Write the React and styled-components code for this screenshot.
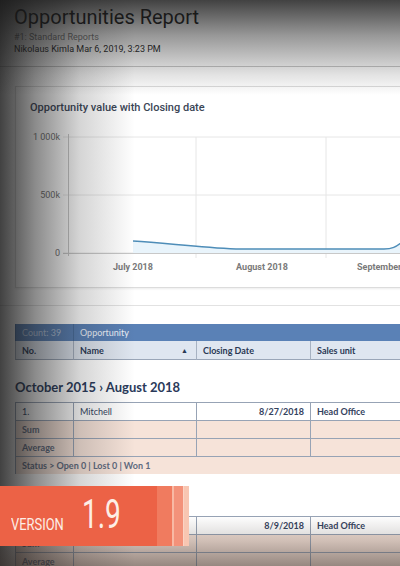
import React from 'react';
import styled, { createGlobalStyle } from 'styled-components';

const Global = createGlobalStyle`
  html, body {
    margin: 0;
    padding: 0;
    background: #fff;
  }
`;

const Page = styled.div`
  position: relative;
  width: 400px;
  height: 566px;
  overflow: hidden;
  background: #fff;
  font-family: Lato, "Liberation Sans", sans-serif;
`;

const Header = styled.header`
  padding: 5px 14px 0;
  height: 61px;
  border-bottom: 1px solid #c9c9c9;
  font-family: Roboto, "Liberation Sans", sans-serif;
`;

const Title = styled.h1`
  margin: 0;
  font-size: 20px;
  font-weight: 400;
  line-height: 25px;
  color: #1c1c1c;
`;

const Sub = styled.div`
  margin-top: 2px;
  font-size: 9px;
  line-height: 11px;
  color: #7a7a7a;
`;

const Meta = styled.div`
  font-size: 9px;
  line-height: 12px;
  color: #2a2a2a;
`;

const ChartCard = styled.section`
  margin: 19px 0 0 15px;
  width: 400px;
  height: 200px;
  border: 1px solid #dcdcdc;
  border-right: none;
  background: #fff;
  box-shadow: 0 1px 2px rgba(0, 0, 0, 0.08);
`;

const ChartTitle = styled.h2`
  margin: 0;
  padding: 14px 14px 0;
  height: 21px;
  font-family: Roboto, "Liberation Sans", sans-serif;
  font-size: 11px;
  font-weight: 500;
  color: #3b4656;
`;

const Svg = styled.svg`
  display: block;
  font-family: Roboto, "Liberation Sans", sans-serif;
`;

const Divider = styled.div`
  margin-top: 17px;
  height: 1px;
  background: #e2e2e2;
`;

const Grid = styled.div`
  display: grid;
  grid-template-columns: 58px 123px 114px 120px;
  margin-left: 15px;
  width: 415px;
  font-size: 9px;
`;

const HeadGrid = styled(Grid)`
  margin-top: 18px;
`;

const HeadTop = styled.div`
  height: 17px;
  line-height: 17px;
  padding-left: 6px;
  background: #5a81b6;
  color: ${(p) => (p.$dim ? '#b3c5de' : '#eef3fa')};
  border-left: 1px solid #4a6f9f;
  grid-column: ${(p) => p.$span || 'auto'};
`;

const HeadCell = styled.div`
  display: flex;
  align-items: center;
  justify-content: space-between;
  height: 18px;
  padding: 0 8px 0 6px;
  background: #dfe6f0;
  border-left: 1px solid #a7b2c2;
  border-bottom: 1px solid #9aa6b8;
  font-weight: 700;
  color: #2a3854;
`;

const Caret = styled.span`
  font-size: 7px;
  color: #2a3854;
`;

const GroupTitle = styled.h3`
  margin: 0;
  padding: 19px 0 6px 15px;
  height: 17px;
  font-size: 13px;
  font-weight: 700;
  color: #2a3a5a;
`;

const Cell = styled.div`
  height: 17px;
  line-height: 17px;
  padding: 0 6px;
  background: ${(p) => (p.$peach ? '#f6e3d9' : '#fff')};
  border-left: 1px solid #97a3b5;
  border-top: 1px solid #97a3b5;
  text-align: ${(p) => (p.$right ? 'right' : 'left')};
  font-weight: ${(p) => (p.$bold ? 700 : 400)};
  color: ${(p) => (p.$muted ? '#5f6b80' : '#34425e')};
  grid-column: ${(p) => p.$span || 'auto'};
  white-space: nowrap;
  overflow: hidden;
`;

const Shade = styled.div`
  position: absolute;
  inset: 0;
  pointer-events: none;
  background:
    linear-gradient(to top, rgba(55, 45, 40, 0.5) 0px, rgba(55, 45, 40, 0.2) 25px, rgba(55, 45, 40, 0) 50px),
    linear-gradient(to bottom, rgba(24, 24, 24, 0.82) 0px, rgba(24, 24, 24, 0.45) 35px, rgba(24, 24, 24, 0.12) 75px, rgba(24, 24, 24, 0) 95px),
    linear-gradient(to right, rgba(24, 24, 24, 0.82) 0px, rgba(24, 24, 24, 0.5) 35px, rgba(24, 24, 24, 0.18) 80px, rgba(24, 24, 24, 0) 135px);
`;

const Badge = styled.div`
  position: absolute;
  left: 0;
  top: 486px;
  display: flex;
  height: 60px;
`;

const BadgeMain = styled.div`
  display: flex;
  align-items: flex-end;
  width: 157px;
  padding-bottom: 13px;
  box-sizing: border-box;
  background: #ec6246;
  color: #fdeee6;
  font-family: Roboto, "Liberation Sans", sans-serif;
  font-weight: 400;
`;

const Word = styled.span`
  display: inline-block;
  font-size: 17px;
  line-height: 17px;
  transform: scaleX(0.76);
  transform-origin: left bottom;
  margin-left: 11px;
  width: 71px;
`;

const Num = styled.span`
  display: inline-block;
  font-size: 40px;
  line-height: 36px;
  transform: scaleX(0.7);
  transform-origin: left bottom;
`;

const Stripe = styled.div`
  width: ${(p) => p.$w}px;
  background: ${(p) => p.$c};
`;

function Row({ cells }) {
  return cells.map((c, i) => (
    <Cell key={i} {...c.props}>
      {c.text}
    </Cell>
  ));
}

const dataRow = (no, name, date) => [
  { text: no },
  { text: name },
  { text: date, props: { $right: true, $bold: true } },
  { text: 'Head Office', props: { $bold: true } },
];

const peachRow = (label) => [
  { text: label, props: { $peach: true, $bold: true, $muted: true } },
  { text: '', props: { $peach: true } },
  { text: '', props: { $peach: true } },
  { text: '', props: { $peach: true } },
];

function Chart() {
  const grid = [15, 73, 131];
  return (
    <Svg width="384" height="160" viewBox="0 0 384 160">
      {grid.map((y) => (
        <line key={y} x1="47" x2="384" y1={y} y2={y} stroke="#e6e6e6" strokeWidth="1" />
      ))}
      {[180, 310].map((x) => (
        <line key={x} x1={x} x2={x} y1="15" y2="136" stroke="#e6e6e6" strokeWidth="1" />
      ))}
      <line x1="52.5" x2="52.5" y1="12" y2="134" stroke="#c8c8c8" />
      <line x1="47" x2="384" y1="131.5" y2="131.5" stroke="#c8c8c8" />
      <g fontSize="9" fill="#6f6f6f" textAnchor="end">
        <text x="44" y="18">1 000k</text>
        <text x="44" y="76">500k</text>
        <text x="44" y="134">0</text>
      </g>
      <g fontSize="9" fontWeight="700" fill="#7a7a7a" textAnchor="middle">
        <text x="117" y="148">July 2018</text>
        <text x="246" y="148">August 2018</text>
        <text x="341" y="148" textAnchor="start">September 2018</text>
      </g>
      <path d="M117 119 C150 121 180 125 220 127 L368 127 C376 127 380 125 386 120 L386 131 L117 131 Z" fill="#e9f4fb" />
      <path d="M117 119 C150 121 180 125 220 127 L368 127 C376 127 380 125 386 120" fill="none" stroke="#4e8db8" strokeWidth="1.5" />
    </Svg>
  );
}

export default function App() {
  return (
    <Page>
      <Global />
      <Header>
        <Title>Opportunities Report</Title>
        <Sub>#1: Standard Reports</Sub>
        <Meta>Nikolaus Kimla Mar 6, 2019, 3:23 PM</Meta>
      </Header>

      <ChartCard>
        <ChartTitle>Opportunity value with Closing date</ChartTitle>
        <Chart />
      </ChartCard>
      <Divider />

      <HeadGrid>
        <HeadTop $dim>Count: 39</HeadTop>
        <HeadTop $span="span 3">Opportunity</HeadTop>
        <HeadCell>No.</HeadCell>
        <HeadCell>
          Name <Caret>▲</Caret>
        </HeadCell>
        <HeadCell>Closing Date</HeadCell>
        <HeadCell>Sales unit</HeadCell>
      </HeadGrid>

      <GroupTitle>October 2015 › August 2018</GroupTitle>
      <Grid>
        <Row cells={dataRow('1.', 'Mitchell', '8/27/2018')} />
        <Row cells={peachRow('Sum')} />
        <Row cells={peachRow('Average')} />
        <Cell $span="span 4" $peach $bold $muted>
          Status &gt; Open 0 | Lost 0 | Won 1
        </Cell>
      </Grid>

      <GroupTitle>September 2018</GroupTitle>
      <Grid>
        <Row cells={dataRow('2.', 'Jackson', '8/9/2018')} />
        <Row cells={peachRow('Sum')} />
        <Row cells={peachRow('Average')} />
      </Grid>

      <Shade />

      <Badge>
        <BadgeMain>
          <Word>VERSION</Word>
          <Num>1.9</Num>
        </BadgeMain>
        <Stripe $w={15} $c="#f07b5f" />
        <Stripe $w={2} $c="#f8b9a4" />
        <Stripe $w={9} $c="#f3927a" />
        <Stripe $w={1} $c="#fbd3c4" />
        <Stripe $w={5} $c="#f8c6b2" />
      </Badge>
    </Page>
  );
}
